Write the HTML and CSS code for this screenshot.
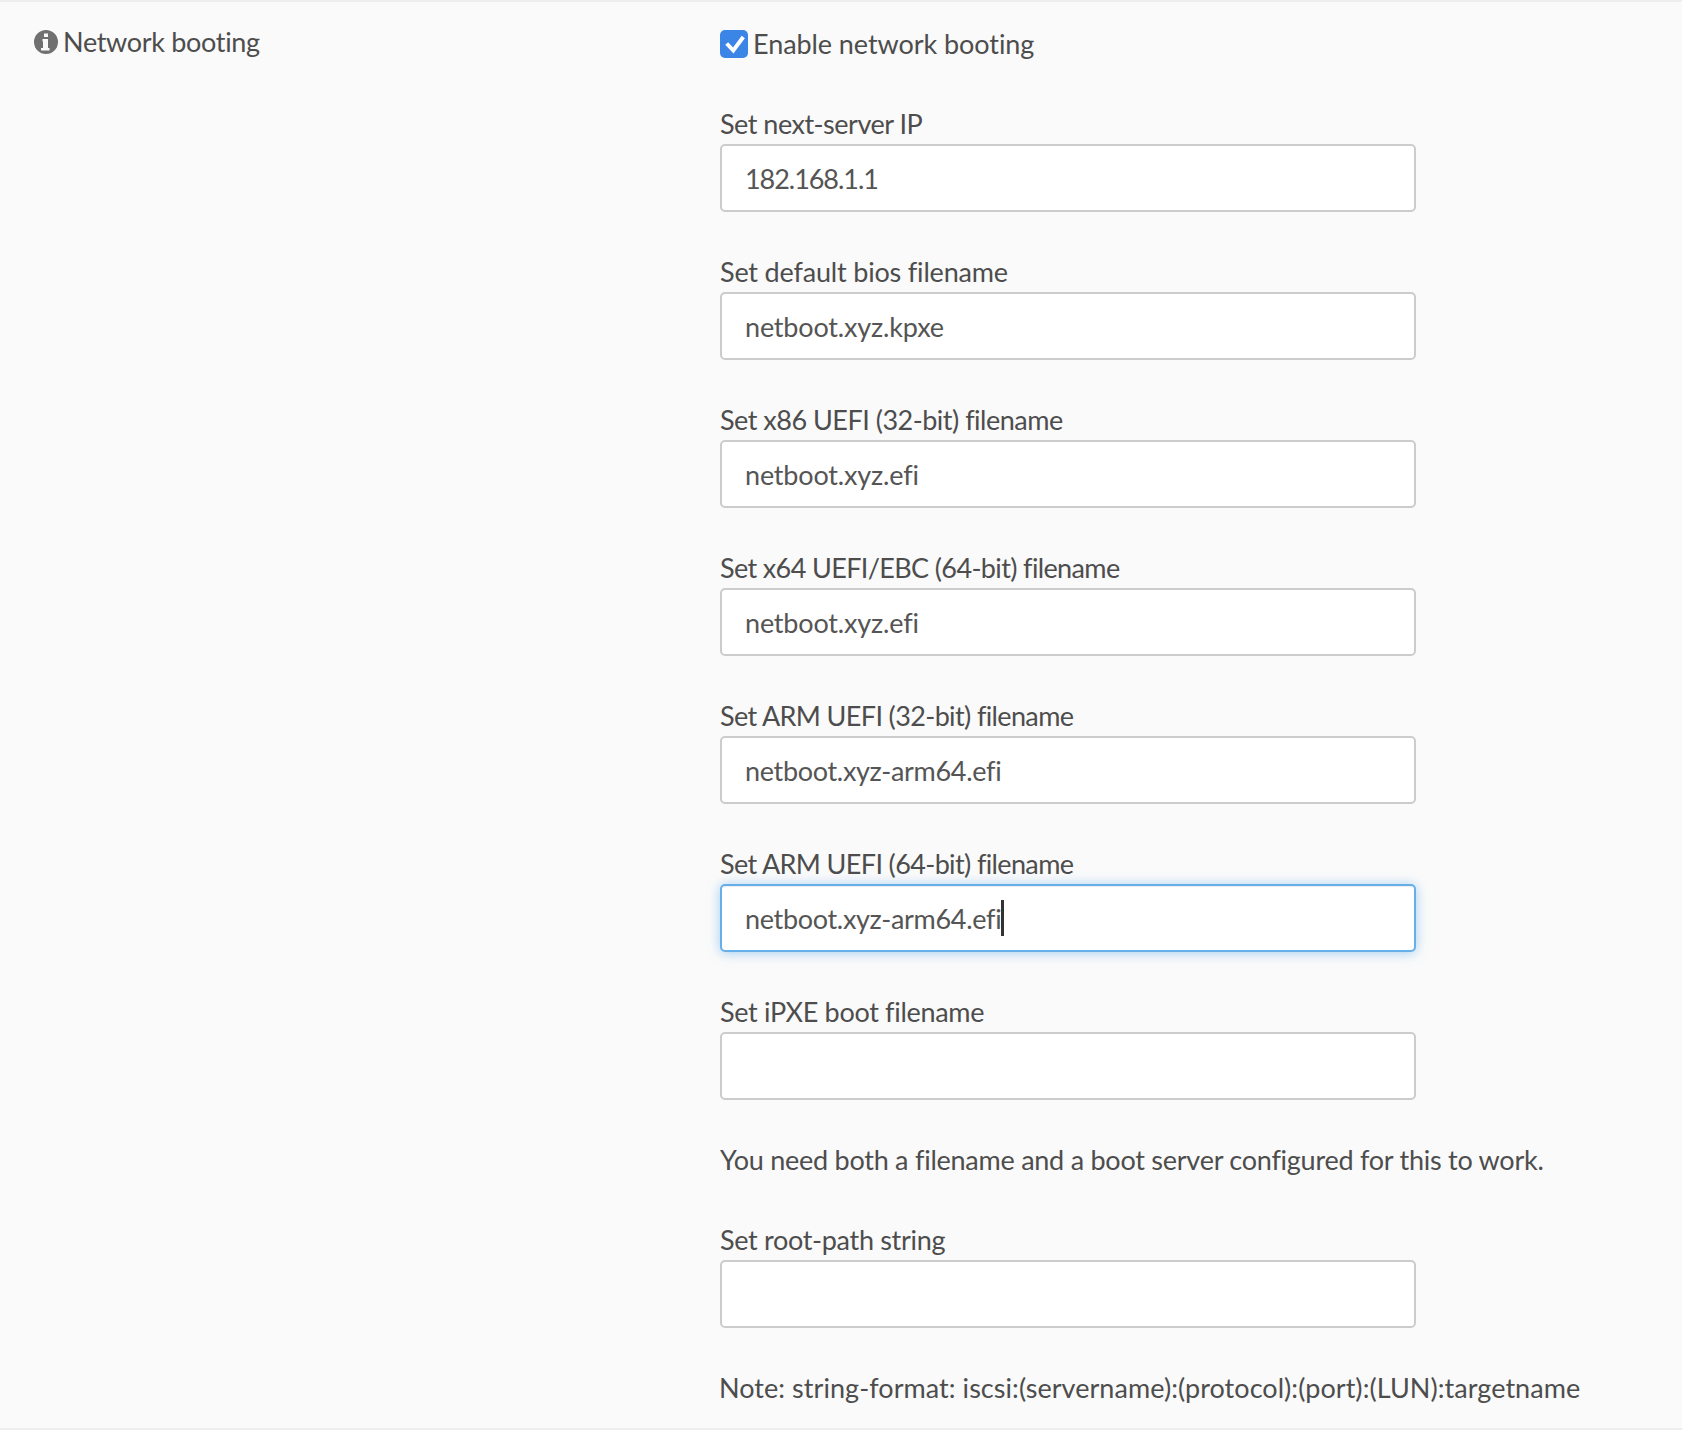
FILE: index.html

```html
<!DOCTYPE html>
<html lang="en">
<head>
  <meta charset="UTF-8">
  <meta name="viewport" content="width=device-width, initial-scale=1">
  <title>Network booting</title>
  <link rel="stylesheet" href="styles.css">
</head>
<body>

<div class="row">
  <div class="row-title">
    <svg class="info-icon" viewBox="0 0 24 24" aria-hidden="true">
      <path fill-rule="evenodd" d="M12 0a12 12 0 1 0 0 24a12 12 0 0 0 0-24zM10 3.500h4v3.500h-4zM8.500 9h5.500v9h1.500v2.500h-8.500v-2.500h2v-6.500h-.5z"/>
    </svg>
    <span class="ls-m">Network booting</span>
  </div>

  <div class="row-body">
    <label class="check-line">
      <span class="check-box">
        <svg viewBox="0 0 28 28" aria-hidden="true"><path d="M6.700 13.500l6.600 7l10-13.500"/></svg>
      </span>
      <span class="ls-xs">Enable network booting</span>
    </label>

    <div class="field">
      <label class="ls-l">Set next-server IP</label>
      <input class="ls-num" type="text" value="182.168.1.1">
    </div>
    <div class="field">
      <label class="ls-s">Set default bios filename</label>
      <input class="ls-s" type="text" value="netboot.xyz.kpxe">
    </div>
    <div class="field">
      <label class="ls-l">Set x86 UEFI (32-bit) filename</label>
      <input class="ls-s" type="text" value="netboot.xyz.efi">
    </div>
    <div class="field">
      <label class="ls-xl">Set x64 UEFI/EBC (64-bit) filename</label>
      <input class="ls-s" type="text" value="netboot.xyz.efi">
    </div>
    <div class="field">
      <label class="ls-xl">Set ARM UEFI (32-bit) filename</label>
      <input class="ls-m" type="text" value="netboot.xyz-arm64.efi">
    </div>
    <div class="field">
      <label class="ls-xl">Set ARM UEFI (64-bit) filename</label>
      <div class="input-wrap">
        <input class="ls-m focused" type="text" value="netboot.xyz-arm64.efi">
        <span class="caret"></span>
      </div>
    </div>
    <div class="field">
      <label class="ls-m">Set iPXE boot filename</label>
      <input type="text">
    </div>

    <p class="help">You need both a filename and a boot server configured for this to work.</p>

    <div class="field">
      <label class="ls-m">Set root-path string</label>
      <input type="text">
    </div>

    <p class="help note">Note: string-format: iscsi:(servername):(protocol):(port):(LUN):targetname</p>
  </div>
</div>

</body>
</html>
```

FILE: styles.css

```css
body {
  margin: 0;
  background: #fff;
  color: #4d4d4d;
  font-family: Lato, "Open Sans", sans-serif;
  font-size: 27px;
  line-height: 38px;
  font-variant-ligatures: none;
}

.row {
  display: grid;
  grid-template-columns: 720px 1fr;
  background: #fafafa;
  border-top: 2px solid #eeeeee;
  border-bottom: 2px solid #eeeeee;
  padding: 21px 0 20px;
}

.row-title {
  display: flex;
  align-items: flex-start;
  gap: 5px;
  padding-left: 34px;
}

.info-icon {
  width: 24px;
  height: 24px;
  margin-top: 7px;
  fill: #707070;
}

.check-line {
  display: flex;
  align-items: center;
  gap: 5px;
  margin: 2px 0 43px;
}

.check-box {
  width: 28px;
  height: 28px;
  border-radius: 5px;
  background: #3a85e6;
}
.check-box svg {
  display: block;
  fill: none;
  stroke: #fff;
  stroke-width: 4;
}

.field { margin-bottom: 42px; }

.field label {
  display: block;
  line-height: 36px;
  padding-bottom: 2px;
}

.field input {
  display: block;
  box-sizing: border-box;
  width: 696px;
  height: 68px;
  padding: 0 23px;
  background: #fff;
  border: 2px solid #cccccc;
  border-radius: 5px;
  color: #555;
  font: inherit;
  font-variant-ligatures: none;
  outline: none;
}

.field input.focused {
  border-color: #66afe9;
  box-shadow: inset 0 1px 1px rgba(0, 0, 0, .075), 0 1px 12px rgba(102, 175, 233, .6);
}

.input-wrap { position: relative; }

.caret {
  position: absolute;
  left: 281px;
  top: 16px;
  width: 3px;
  height: 36px;
  background: #333;
}

.help {
  margin: 0 0 42px;
  line-height: 36px;
  padding-bottom: 2px;
  letter-spacing: -.25px;
}
.help.note { margin-bottom: 0; letter-spacing: .05px; margin-left: -1px; }

/* Lato runs wider than the original face, pull some lines in */
.ls-xs { letter-spacing: -.07px; }
.ls-s, .field input.ls-s { letter-spacing: -.18px; }
.ls-m, .field input.ls-m { letter-spacing: -.32px; }
.ls-l { letter-spacing: -.5px; }
.ls-xl { letter-spacing: -.63px; }
.field input.ls-num { letter-spacing: -1.05px; }
```
